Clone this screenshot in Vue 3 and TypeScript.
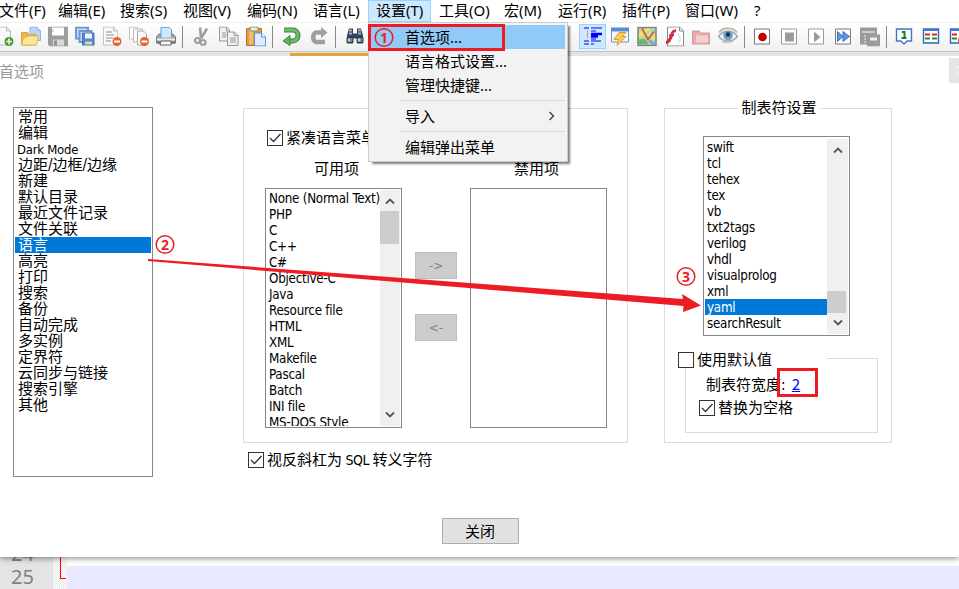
<script setup lang="ts">
interface MenuEntry { label: string; width: number; open?: boolean }

const menus: MenuEntry[] = [
  { label: '文件(F)', width: 59 },
  { label: '编辑(E)', width: 62 },
  { label: '搜索(S)', width: 63 },
  { label: '视图(V)', width: 64 },
  { label: '编码(N)', width: 66 },
  { label: '语言(L)', width: 63 },
  { label: '设置(T)', width: 63, open: true },
  { label: '工具(O)', width: 65 },
  { label: '宏(M)', width: 54 },
  { label: '运行(R)', width: 64 },
  { label: '插件(P)', width: 63 },
  { label: '窗口(W)', width: 69 },
  { label: '?', width: 24 },
]

const tools: string[] = [
  'new', 'open', 'save', 'saveall', 'close', 'closeall', 'print', '|',
  'cut', 'copy', 'paste', '|', 'undo', 'redo', '|', 'find', 'gap', 'indent',
  'udl', 'map', 'func', 'folder', 'eye', '|s',
  'rec', 'stop', 'play', 'multi', 'savemacro', '|s', 'cmp', 'grid', 'gridx',
]

const pages: string[] = [
  '常用', '编辑', 'Dark Mode', '边距/边框/边缘', '新建', '默认目录', '最近文件记录',
  '文件关联', '语言', '高亮', '打印', '搜索', '备份', '自动完成', '多实例', '定界符',
  '云同步与链接', '搜索引擎', '其他',
]

const available: string[] = [
  'None (Normal Text)', 'PHP', 'C', 'C++', 'C#', 'Objective-C', 'Java', 'Resource file',
  'HTML', 'XML', 'Makefile', 'Pascal', 'Batch', 'INI file', 'MS-DOS Style',
]

const tabLangs: string[] = [
  'swift', 'tcl', 'tehex', 'tex', 'vb', 'txt2tags', 'verilog', 'vhdl',
  'visualprolog', 'xml', 'yaml', 'searchResult',
]
</script>

<template>
  <div class="app">
    <nav class="menubar">
      <span v-for="m in menus" :key="m.label" class="menu" :class="{ open: m.open }" :style="{ width: m.width + 'px' }">{{ m.label }}</span>
    </nav>

    <div class="toolbar">
      <template v-for="(t, i) in tools" :key="i">
        <i v-if="t === '|' || t === '|s'" class="sep" :class="{ tight: t === '|s' }"></i>
        <i v-else-if="t === 'gap'" class="gap"></i>
        <span v-else class="tool" :class="{ pressed: t === 'indent' }">
          <svg width="20" height="20" viewBox="0 0 20 20" fill="none">
            <g v-if="t === 'new'">
              <path d="M3.500.5h9l4 4v14h-13z" fill="#fafafa" stroke="#b5b5b5" /><path d="M12.500.5v4h4" stroke="#bbb" />
              <circle cx="15" cy="15" r="4.500" fill="#469a35" /><path d="M15 12v6M12 15h6" stroke="#e6f6df" stroke-width="1.600" />
            </g>
            <g v-else-if="t === 'open'">
              <path d="M9 .5h7l3.500 3.500v10H9z" fill="#b9d7fa" stroke="#8fb4e6" /><path d="M16 1v3h3" fill="#e7f2ff" stroke="#8fb4e6" />
              <path d="M.5 6h6l1.500 2h7v10.500H.5z" fill="#edb64c" stroke="#dba345" />
              <path d="M2.500 11.500l6-2h9l-2 9H.7z" fill="#ffe49c" stroke="#e4b45b" />
            </g>
            <g v-else-if="t === 'save'">
              <path d="M0 0h20v20H2l-2-2z" fill="#9d9d9d" /><path d="M4 1h12v8H4z" fill="#fff" /><path d="M5 2.500v3" stroke="#bbb" />
              <path d="M5 13h11v6H5z" fill="#d8d8d8" /><path d="M6 14h3v5H6z" fill="#929292" />
            </g>
            <g v-else-if="t === 'saveall'">
              <path d="M1 1h12v11H1z" fill="#c7dcf7" stroke="#6f96d0" stroke-width="2" /><path d="M4.500 4.500h12v11h-12z" fill="#c7dcf7" stroke="#6f96d0" stroke-width="2" />
              <path d="M7.500 6.500h11.500v12H7.500z" fill="#5686cf" stroke="#4472ba" /><path d="M10 7h7v5h-7z" fill="#ecf5ff" /><path d="M10 15h7v3h-7z" fill="#cbe1a0" />
            </g>
            <g v-else-if="t === 'close'">
              <path d="M1.500.5h10l4 4v14h-14z" fill="#fafafa" stroke="#c4c4c4" /><path d="M11.500.5v4h4" stroke="#bbb" />
              <path d="M4 5.500h6M4 8.500h8M4 11.500h7M4 14.500h5" stroke="#8a8a8a" />
              <circle cx="15" cy="15" r="4.500" fill="#e4652d" /><path d="M12 15h6" stroke="#fff" stroke-width="1.800" />
            </g>
            <g v-else-if="t === 'closeall'">
              <path d="M.5.5h8v12h-8z" fill="#fafafa" stroke="#c0c0c0" /><path d="M4.500 2.500h9v13h-9z" fill="#fafafa" stroke="#bcbcbc" /><path d="M8.500 4.500h6l3 3v11h-9z" fill="#fafafa" stroke="#aaa" />
              <circle cx="15.500" cy="15" r="4.500" fill="#e4652d" /><path d="M12.500 15h6" stroke="#fff" stroke-width="1.800" />
            </g>
            <g v-else-if="t === 'print'">
              <path d="M3 7.500h14l2.500 3v6H.5v-6z" fill="#a4a8ad" stroke="#757a80" /><path d="M5 11V.8h8l2.500 2.500V11" fill="#cfe6ff" stroke="#6499dc" />
              <path d="M1 12h18v2H1z" fill="#e8e8e8" /><path d="M1 15h18v2H1z" fill="#6b6f74" /><path d="M5 14.500h10v4H4z" fill="#f8f8f8" stroke="#666" />
            </g>
            <g v-else-if="t === 'cut'">
              <path d="M8 1l1 10M15 2l-6 10" stroke="#9e9e9e" stroke-width="2.600" /><circle cx="5.500" cy="14" r="2.500" stroke="#9e9e9e" stroke-width="2.200" /><circle cx="11" cy="16" r="2.500" stroke="#9e9e9e" stroke-width="2.200" />
            </g>
            <g v-else-if="t === 'copy'">
              <path d="M.5.500h7l3 3v11H.5z" fill="#f0f0f0" stroke="#999" /><path d="M7.500.5v4h3M3 6.500h4M3 8.500h5M3 10.500h4" stroke="#999" />
              <path d="M8.500 5.500h7l3.500 3.500v10H8.500z" fill="#f0f0f0" stroke="#999" /><path d="M15 5.500V9h4M11 11.500h6M11 13.500h6M11 15.500h6" stroke="#999" />
            </g>
            <g v-else-if="t === 'paste'">
              <path d="M.5 2h15v17H.5z" fill="#df9c40" stroke="#b87528" /><path d="M3 3h4v15H3z" fill="#efbb6c" /><path d="M4 .5h8v4H4z" fill="#ededcf" stroke="#888" />
              <path d="M8.500 6.500h7l4 4v9h-11z" fill="#dcebff" stroke="#628fd0" /><path d="M15.500 6.500v4h4" fill="#fff" stroke="#628fd0" />
            </g>
            <g v-else-if="t === 'undo'">
              <path d="M2 3.500h9a5 5.500 0 010 11H7" stroke="#36883a" stroke-width="5" /><path d="M2 3.500h9a5 5.500 0 010 11H7" stroke="#72b968" stroke-width="3" /><path d="M8 9v10L1 14.500z" fill="#68b261" stroke="#36883a" />
            </g>
            <g v-else-if="t === 'redo'">
              <path d="M14 6H7a4 5 0 000 9.500h9" stroke="#9e9e9e" stroke-width="4.500" /><path d="M12 .5v11L18.500 6z" fill="#9e9e9e" />
            </g>
            <g v-else-if="t === 'find'">
              <path d="M4 2h4v5h4V2h4l2 7v8h-6v-5H8v5H2V9z" fill="#34465d" /><path d="M4 4h3M13 4h3M4 7h3M13 7h3" stroke="#a2b2c6" stroke-width="2" />
              <path d="M2 11h6v5H2zM12 11h6v5h-6z" fill="#72849a" stroke="#253446" /><path d="M4 12v3M14 12v3" stroke="#dce5ed" stroke-width="1.500" />
            </g>
            <g v-else-if="t === 'indent'">
              <path d="M1 1.500h5M8 1.500h11M8 4.500h5M1 14.500h5M8 14.500h10M1 17.500h5M8 17.500h3M8 12.500h5" stroke="#00e" />
              <path d="M8 7.500h11M8 10h7" stroke="#00f" stroke-width="2.500" /><path d="M4.500 4v8" stroke="#f33" stroke-dasharray="1 1" />
            </g>
            <g v-else-if="t === 'udl'">
              <path d="M1.500 2.500h17v13h-17z" fill="#f3f8ff" stroke="#6b93cd" /><path d="M1 1h18v4H1z" fill="#5b8bd0" /><path d="M9 6h7l-4 4h4l-9 9 1.500-6H4z" fill="#f9cf50" stroke="#dc9a35" />
            </g>
            <g v-else-if="t === 'map'">
              <path d="M1 1h18v18H1z" fill="#c1dc91" stroke="#77857a" stroke-width="1.500" /><path d="M2 7l8-5h4L2 11zM10 8h8v6z" fill="#f3df70" /><path d="M14 2h4v5z" fill="#a9cdef" /><path d="M2 13l6-1 4 6H2z" fill="#71b078" /><path d="M5 2l6 11 6-8" stroke="#d34e48" stroke-width="1.600" /><path d="M12 14l6 4" stroke="#7ca5dc" stroke-width="3" />
            </g>
            <g v-else-if="t === 'func'">
              <path d="M3.500.5h12l4 4v15h-16z" fill="#fff" stroke="#888" /><path d="M15.500.5v4h4" stroke="#888" /><path d="M12 4.500c-5-1-3 4-6 8-1 2-2 3.500-4 3.500" stroke="#d0303c" stroke-width="3" /><path d="M5 9l5-.5" stroke="#d0303c" stroke-width="2" /><path d="M14 8c3 2 3 6 0 9" stroke="#aaa" stroke-dasharray="1 1" />
            </g>
            <g v-else-if="t === 'folder'">
              <path d="M1.500 4.500h7l1 2h9v11h-17z" fill="#e9abb0" stroke="#d6979c" /><path d="M4.500 8.500h13v8h-13z" fill="#f4ced0" stroke="#dfadb0" />
            </g>
            <g v-else-if="t === 'eye'">
              <path d="M1 6c5-6 14-5 18 0" stroke="#c8b89f" stroke-width="2" /><path d="M.5 10c5-7 14-7 19 0-5 6-14 6-19 0z" fill="#f4f6f6" stroke="#9ba6ae" stroke-width="1.400" /><circle cx="10" cy="9" r="4.800" fill="#759fc5" /><circle cx="10" cy="8" r="2.200" fill="#153451" /><path d="M4 15c5 2 9 1 12-1" stroke="#d2c4aa" stroke-width="1.500" />
            </g>
            <g v-else-if="t === 'rec'">
              <path d="M2.500 2.500h15v15h-15z" fill="#fff" stroke="#777" /><circle cx="10.500" cy="10.500" r="4.300" fill="#c60000" />
            </g>
            <g v-else-if="t === 'stop'">
              <path d="M2.500 2.500h15v15h-15z" fill="#fff" stroke="#999" /><path d="M6 6h9v9H6z" fill="#9c9c9c" />
            </g>
            <g v-else-if="t === 'play'">
              <path d="M2.500 2.500h15v15h-15z" fill="#fff" stroke="#999" /><path d="M8 5l6.500 5.500L8 16z" fill="#9c9c9c" />
            </g>
            <g v-else-if="t === 'multi'">
              <path d="M2.500 2.500h15v15h-15z" fill="#fff" stroke="#777" /><path d="M4.500 5l5.500 5-5.500 5zM10 5l6.500 5L10 15z" fill="#5f98e0" stroke="#3472c4" />
            </g>
            <g v-else-if="t === 'savemacro'">
              <path d="M0 1h17v17H0z" fill="#9b9b9b" /><path d="M2 5.500h13" stroke="#fff" /><path d="M4 9.500h9M4 12.500h5M4 15.500h5" stroke="#eee" stroke-dasharray="2 1" /><path d="M7 8h13v12H7z" fill="#9b9b9b" /><path d="M10 11h7v3h-7z" fill="#eee" />
            </g>
            <g v-else-if="t === 'cmp'">
              <path d="M2.500 2.500h15v12H13l-3 3-3-3H2.500z" fill="#fff" stroke="#3d78c8" stroke-width="1.400" /><path d="M8 5.500h2.500V11M7.500 11.500h5" stroke="#16831c" stroke-width="2" />
            </g>
            <g v-else>
              <path d="M2.500 2.500h15v14h-15z" fill="#fff" stroke="#2b65b6" stroke-width="1.400" /><path d="M2 3.500h16" stroke="#3e7bd0" stroke-width="2" />
              <path d="M4 8h5M11 8h5" stroke="#e02020" stroke-width="2" /><path d="M11 12h5M4 12h5" stroke="#17952a" stroke-width="2" /><circle v-if="t === 'gridx'" cx="14" cy="14" r="4" fill="#c94444" />
            </g>
          </svg>
        </span>
      </template>
    </div>
    <div class="tabstrip"><i class="tab"></i></div>

    <main class="dialog">
      <header class="caption"><span>首选项</span><i class="x"><svg width="10" height="25" viewBox="0 0 10 25"><path d="M8 8l9 9M17 8l-9 9" /></svg></i></header>
      <div class="columns">
        <ul class="list pages">
          <li v-for="p in pages" :key="p" :class="{ on: p === '语言' }">{{ p }}</li>
        </ul>

        <section class="middle">
          <div class="group langs">
            <label class="check"><i class="box"><svg width="14" height="14" viewBox="0 0 14 14"><path d="M2 7l3.500 3.500L12.500 3" /></svg></i>紧凑语言菜单</label>
            <div class="heads"><span>可用项</span><span>禁用项</span></div>
            <div class="transfer">
              <div class="list boxed avail">
                <ul><li v-for="l in available" :key="l">{{ l }}</li></ul>
                <div class="scroll">
                  <svg width="10" height="8" viewBox="0 0 10 8"><path d="M1 6.500L5 2.500l4 4" /></svg>
                  <i class="thumb"></i>
                  <svg width="10" height="8" viewBox="0 0 10 8"><path d="M1 1.500l4 4 4-4" /></svg>
                </div>
              </div>
              <div class="moves"><button>-&gt;</button><button>&lt;-</button></div>
              <div class="list disabled"></div>
            </div>
          </div>
          <label class="check sql"><i class="box"><svg width="14" height="14" viewBox="0 0 14 14"><path d="M2 7l3.500 3.500L12.500 3" /></svg></i><span>视反斜杠为<b> SQL </b>转义字符</span></label>
        </section>

        <section class="group tabs">
          <h3>制表符设置</h3>
          <div class="list boxed tablist">
            <ul><li v-for="l in tabLangs" :key="l" :class="{ on: l === 'yaml' }">{{ l }}</li></ul>
            <div class="scroll low">
              <svg width="10" height="8" viewBox="0 0 10 8"><path d="M1 6.500L5 2.500l4 4" /></svg>
              <i class="thumb"></i>
              <svg width="10" height="8" viewBox="0 0 10 8"><path d="M1 1.500l4 4 4-4" /></svg>
            </div>
          </div>
          <div class="group inner">
            <label class="check usedef"><i class="box"></i>使用默认值</label>
            <p class="size">制表符宽度: <a>2</a></p>
            <label class="check"><i class="box"><svg width="14" height="14" viewBox="0 0 14 14"><path d="M2 7l3.500 3.500L12.500 3" /></svg></i>替换为空格</label>
          </div>
        </section>
      </div>
      <button class="shut">关闭</button>
    </main>

    <footer class="editor">
      <div class="gutter"><span>24</span><span>25</span></div>
      <div class="fold"><i></i></div>
      <div class="code"></div>
    </footer>

    <div class="popup">
      <div class="item hot">首选项...</div>
      <div class="item">语言格式设置...</div>
      <div class="item">管理快捷键...</div>
      <hr />
      <div class="item sub">导入<svg width="8" height="10" viewBox="0 0 8 10"><path d="M1.500 1l4 4-4 4" /></svg></div>
      <hr />
      <div class="item">编辑弹出菜单</div>
    </div>

    <svg class="marks" width="959" height="589" viewBox="0 0 959 589">
      <path d="M148 259l535 40-1-5 19 11.500L683 312l.5-6L148 261z" fill="#ed1c24" />
      <g fill="none" stroke="#ed1c24">
        <rect x="369.500" y="25.500" width="134" height="24" stroke-width="3" />
        <rect x="778.500" y="369.500" width="38" height="26" stroke-width="3" />
        <circle cx="384" cy="37.500" r="8.800" stroke-width="1.500" />
        <circle cx="165" cy="244.500" r="8.800" stroke-width="1.500" />
        <circle cx="686" cy="276.500" r="8.800" stroke-width="1.500" />
      </g>
      <g class="nums"><text x="384" y="42.500">1</text><text x="165" y="249.500">2</text><text x="686" y="281.500">3</text></g>
    </svg>
  </div>
</template>

<style>
body { margin: 0; overflow: hidden; }
</style>

<style scoped>
.app { position: relative; width: 959px; height: 589px; overflow: hidden; background: #fff; color: #000; font: 15px/16px "Noto Sans", "Noto Sans CJK SC", sans-serif; display: flex; flex-direction: column; }
i { font-style: normal; display: block; }
b { font-weight: normal; }
ul, p, h3 { margin: 0; padding: 0; list-style: none; font-weight: normal; font-size: inherit; }
.menubar { display: flex; flex: none; height: 22px; margin-left: -9px; line-height: 21px; }
.menu { flex: none; box-sizing: border-box; padding-left: 8px; white-space: nowrap; font-size: 15px; }
.menu.open { background: #cce8ff; box-shadow: inset 0 0 0 1px #99d1ff; }
.toolbar { display: flex; flex: none; height: 29px; box-sizing: border-box; margin-left: -10px; width: 975px; border-top: 1px solid #efefef; background: linear-gradient(#fff, #f0f0f0); }
.tool { flex: none; width: 27px; height: 27px; display: flex; align-items: center; justify-content: center; }
.tool svg { transform: translateY(-.5px); }
.tool.pressed { background: #cce8ff; box-shadow: inset 0 0 0 1px #99d1ff; height: 25px; margin-top: 1px; }
.sep { flex: none; width: 1px; height: 22px; margin: 3px 5px 0 3px; background: #888; }
.sep.tight { margin-right: 3px; }
.gap { flex: none; width: 211px; }
.tabstrip { flex: none; height: 5px; box-sizing: border-box; border-top: 1px solid #c4c4c4; background: #e3e3e3; }
.tab { width: 79px; height: 3px; margin: 1px 0 0 290px; background: #e8a13c; }
.dialog { flex: none; height: 501px; background: #fff; position: relative; box-shadow: 0 1px 6px rgba(0, 0, 0, .5); font-family: "DejaVu Sans Condensed", "Noto Sans CJK SC", sans-serif; display: flex; flex-direction: column; align-items: center; clip-path: inset(0 0 -20px 0); }
.caption { align-self: stretch; display: flex; justify-content: space-between; height: 51px; color: #999; }
.caption span { line-height: 32px; margin-left: -1px; }
.x { width: 10px; height: 25px; margin-top: 2px; background: #e5e5e5; }
.x svg { display: block; fill: none; stroke: #fff; }
.columns { align-self: stretch; display: grid; grid-template-columns: 140px 511px 228px; justify-content: start; padding-left: 13px; height: 370px; }
.middle { margin-left: 90px; width: 385px; }
.list { box-sizing: border-box; border: 1px solid #828790; background: #fff; }
.pages { height: 370px; padding: 1px; }
.pages li { height: 16px; line-height: 16px; padding-left: 3px; white-space: nowrap; font-size: 15px; }
.pages li:nth-child(3) { font-size: 13px; line-height: 17px; padding-left: 2px; letter-spacing: -.25px; }
.on { background: #0078d7; color: #fff; }
.group { box-sizing: border-box; border: 1px solid #dcdcdc; }
.langs { height: 335px; margin-top: 1px; padding: 21px 20px 0 21px; }
.check { display: flex; align-items: center; gap: 3px; height: 16px; white-space: nowrap; }
.box { box-sizing: border-box; width: 16px; height: 16px; border: 1px solid #333; }
.box svg { display: block; fill: none; stroke: #333; stroke-width: 1.300; }
.langs > .check { margin-left: 2px; }
.heads { display: grid; grid-template-columns: 137px 137px; column-gap: 63px; text-align: center; padding-top: 15px; height: 27px; padding-left: 3px; line-height: 16px; }
.transfer { display: flex; }
.boxed { display: flex; padding: 1px; overflow: hidden; font-size: 13.300px; letter-spacing: -.25px; }
.boxed ul { flex: 1; min-width: 0; overflow: hidden; }
.boxed li { height: 16px; line-height: 17px; padding-left: 2px; white-space: nowrap; overflow: hidden; }
.avail { width: 137px; height: 240px; }
.scroll { flex: none; width: 20px; box-sizing: border-box; background: #f0f0f0; display: flex; flex-direction: column; align-items: center; padding: 7px 0; }
.scroll svg { fill: none; stroke: #555; stroke-width: 1.800; flex: none; }
.scroll svg:last-child { margin-top: auto; }
.thumb { width: 19px; height: 33px; background: #cdcdcd; margin-top: 6px; align-self: flex-start; flex: none; }
.moves { width: 42px; margin: 0 13px; padding-top: 64px; display: flex; flex-direction: column; gap: 35px; }
button { box-sizing: border-box; height: 27px; padding: 0; border: 1px solid #bfbfbf; background: #ccc; color: #808080; font: 13px/16px "DejaVu Sans Condensed", sans-serif; }
.disabled { width: 137px; height: 240px; }
.sql { margin: 9px 0 0 5px; }
.sql b { font-size: 14px; letter-spacing: -.5px; white-space: pre; }
.tabs { height: 335px; margin-top: 1px; padding-left: 20px; }
.tabs h3 { width: 82px; margin: -9px 0 0 53px; background: #fff; text-align: center; height: 17px; }
.tablist { width: 147px; height: 200px; margin: 19px 0 0 18px; padding-top: 2px; }
.scroll.low { width: 21px; }
.scroll.low .thumb { margin-top: 137px; height: 22px; }
.tablist li { width: 122px; box-sizing: border-box; }
.inner { width: 193px; height: 75px; margin-top: 22px; }
.usedef { width: 149px; margin: -8px 0 0 -8px; height: 17px; background: #fff; }
.size { margin: 7px 0 7px 20px; height: 18px; line-height: 18px; }
.size a { color: #00f; text-decoration: underline; margin-left: 2px; font-family: "Noto Sans CJK SC", sans-serif; }
.inner > .check:last-child { margin-left: 13px; }
.shut { width: 77px; margin: 41px 0 0 1px; background: #e1e1e1; border-color: #adadad; color: #000; font: 15px/14px "Noto Sans CJK SC", sans-serif; height: 26px; }
.editor { flex: 1; min-height: 0; display: flex; color: #808080; }
.gutter { width: 53px; background: #e4e4e4; font-size: 20px; line-height: 23px; display: flex; flex-direction: column; padding-left: 11px; box-sizing: border-box; overflow: hidden; }
.gutter span { flex: none; height: 23px; }
.gutter span:first-child { margin-top: -15px; }
.fold { width: 14px; background: repeating-conic-gradient(#e8e8e8 0 25%, #fff 0 50%) 0 0 / 2px 2px; }
.fold i { width: 5px; height: 21px; margin-left: 7px; border-left: 1px solid #f00; border-bottom: 1px solid #f00; }
.code { flex: 1; margin-top: 9px; background: #e8e8ff; }
.popup { position: absolute; left: 368px; top: 22px; width: 200px; height: 140px; box-sizing: border-box; padding: 2px; border: 1px solid #ccc; background: #f2f2f2; box-shadow: 3px 3px 2px -1px rgba(0, 0, 0, .5); }
.item { height: 24px; line-height: 24px; padding-left: 34px; font-size: 15px; }
.hot { background: #91c9f7; }
.sub { display: flex; justify-content: space-between; align-items: center; padding-right: 9px; }
.sub svg { fill: none; stroke: #333; stroke-width: 1.200; }
hr { height: 1px; border: 0; background: #d7d7d7; margin: 3px 0 3px 30px; }
.marks { position: absolute; left: 0; top: 0; }
.nums text { fill: #ed1c24; font: bold 14px "Noto Sans", sans-serif; text-anchor: middle; }
</style>
